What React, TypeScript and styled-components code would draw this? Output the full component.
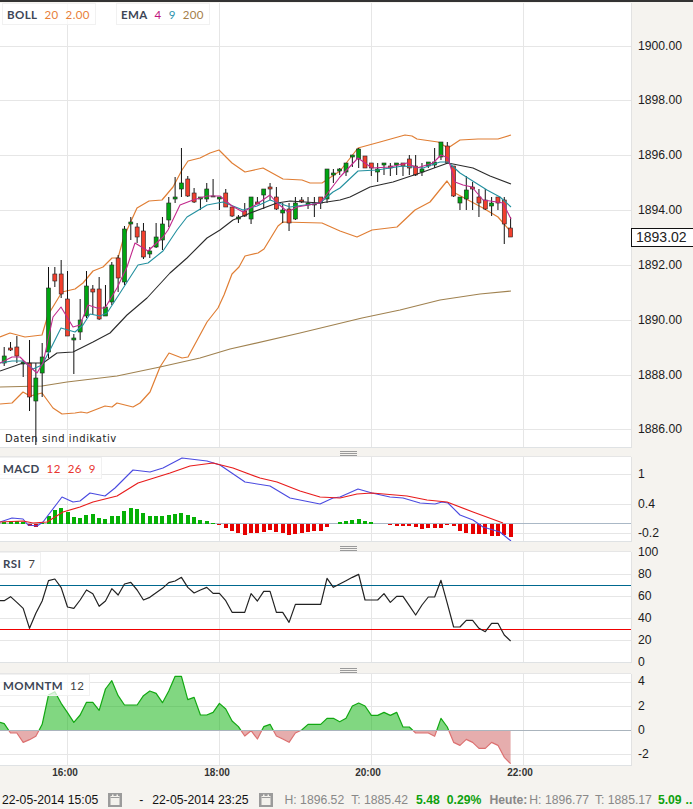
import { createGlobalStyle } from "styled-components";
import styled from "styled-components";

// x of bar i in page pixels; the 2h gridlines fall every 24 bars
const barX = (i: number) => 4.2 + i * 6.33;
const GRID_X = [67.5, 219.5, 371.5, 523.5];
const PLOT_W = 631;

type Pt = [number, number];
const toPoints = (pts: Pt[]) => pts.map(([x, y]) => `${x},${y}`).join(" ");

// [high, bodyTop, bodyBottom, low, up] in pixels of the price pane
type Candle = [number, number, number, number, 0 | 1];
const CANDLES: Candle[] = [
  [347, 356, 363, 366, 1], [342, 348, 350, 351, 0], [336, 347, 356, 363, 0], [360, 362, 364, 377, 1],
  [340, 363, 397, 411, 0], [363, 378, 401, 445, 1], [343, 357, 373, 397, 1], [267, 288, 352, 358, 1],
  [267, 274, 281, 287, 0], [260, 274, 294, 298, 0], [271, 299, 336, 336, 0], [334, 338, 340, 374, 1],
  [299, 320, 332, 340, 1], [271, 286, 316, 318, 1], [285, 289, 292, 315, 0], [277, 289, 319, 320, 0],
  [285, 307, 316, 316, 1], [262, 265, 302, 305, 1], [255, 258, 278, 292, 0], [226, 229, 282, 285, 1],
  [217, 222, 224, 240, 1], [223, 227, 237, 243, 0], [223, 231, 257, 259, 0], [247, 251, 254, 258, 1],
  [223, 237, 247, 248, 1], [217, 224, 240, 250, 1], [197, 203, 220, 227, 1], [177, 197, 199, 203, 1],
  [148, 183, 189, 197, 1], [176, 179, 196, 197, 0], [188, 193, 202, 203, 0], [197, 197, 199, 210, 1],
  [183, 189, 199, 202, 1], [179, 196, 197, 197, 1], [197, 197, 199, 210, 1], [189, 193, 207, 207, 0],
  [207, 207, 216, 217, 0], [215, 217, 219, 223, 1], [203, 211, 216, 217, 0], [197, 197, 219, 224, 1],
  [197, 202, 204, 204, 0], [189, 189, 195, 209, 1], [183, 187, 189, 200, 0], [187, 197, 209, 210, 0],
  [203, 210, 213, 223, 1], [203, 209, 223, 231, 0], [197, 203, 219, 220, 1], [197, 200, 202, 203, 0],
  [197, 203, 205, 209, 1], [197, 204, 205, 217, 1], [197, 197, 203, 209, 0], [169, 169, 199, 203, 1],
  [169, 173, 175, 183, 1], [168, 169, 171, 175, 1], [163, 163, 172, 176, 1], [155, 155, 157, 167, 1],
  [148, 149, 159, 168, 1], [156, 156, 168, 168, 0], [163, 163, 168, 176, 0], [163, 169, 172, 182, 1],
  [163, 163, 165, 175, 1], [163, 166, 168, 176, 0], [163, 163, 165, 175, 1], [163, 163, 166, 176, 0],
  [155, 159, 168, 175, 0], [155, 166, 175, 176, 0], [163, 169, 172, 176, 1], [162, 162, 166, 168, 1],
  [148, 162, 165, 168, 1], [142, 142, 157, 160, 1], [142, 146, 163, 163, 0], [166, 166, 196, 197, 0],
  [197, 197, 203, 210, 1], [176, 190, 199, 210, 1], [182, 187, 189, 210, 0], [189, 197, 203, 217, 0],
  [189, 200, 209, 210, 0], [197, 203, 206, 216, 1], [197, 197, 203, 210, 0], [197, 200, 224, 244, 0],
  [217, 228, 237, 237, 0],
];

const BOLL_UPPER: Pt[] = [
  [0, 337], [10, 333], [25, 337], [42, 335], [48, 315], [62, 292], [75, 289], [83, 283], [93, 271], [103, 267],
  [112, 258], [118, 258], [123, 240], [127, 230], [137, 208], [149, 201], [162, 200], [173, 187], [182, 170],
  [188, 161], [200, 158], [210, 153], [219, 150], [232, 163], [245, 172], [263, 168], [283, 179], [302, 180],
  [310, 183], [322, 183], [340, 171], [358, 148], [380, 142], [405, 135], [412, 136], [417, 139], [438, 142],
  [448, 148], [460, 140], [478, 139], [498, 139], [511, 135],
];
const BOLL_LOWER: Pt[] = [
  [0, 404], [12, 403], [23, 392], [30, 396], [42, 393], [53, 408], [62, 414], [75, 413], [81, 412], [87, 413],
  [105, 406], [112, 407], [117, 403], [133, 407], [140, 403], [150, 392], [160, 367], [169, 353], [182, 358],
  [188, 357], [207, 322], [218, 308], [224, 295], [232, 274], [239, 267], [245, 256], [258, 253], [264, 249],
  [278, 226], [283, 222], [322, 223], [340, 231], [357, 237], [372, 230], [397, 227], [415, 210], [430, 202],
  [447, 181], [455, 193], [483, 208], [498, 217], [511, 232],
];
const EMA_200: Pt[] = [
  [0, 387], [42, 386], [67, 382], [117, 376], [160, 367], [200, 358], [230, 349], [300, 333], [362, 318],
  [400, 310], [440, 300], [480, 294], [511, 291],
];
const EMA_LONG: Pt[] = [
  [0, 371], [23, 363], [43, 363], [57, 353], [73, 352], [93, 342], [110, 333], [127, 315], [147, 298], [170, 273],
  [187, 258], [207, 238], [220, 230], [233, 220], [253, 212], [277, 203], [290, 201], [320, 203], [340, 200],
  [350, 197], [370, 187], [393, 182], [423, 172], [448, 163], [473, 168], [490, 176], [511, 184],
];
const EMA_MID: Pt[] = [
  [0, 363], [12, 361], [23, 361], [33, 369], [42, 365], [50, 350], [61, 328], [75, 332], [83, 325], [90, 314],
  [100, 316], [107, 313], [120, 293], [138, 265], [148, 263], [163, 251], [177, 230], [187, 217], [207, 205],
  [223, 202], [243, 210], [257, 206], [270, 200], [290, 207], [320, 203], [333, 192], [340, 188], [358, 171],
  [377, 170], [403, 166], [423, 168], [440, 162], [448, 162], [460, 173], [487, 190], [500, 197], [511, 207],
];
const EMA_FAST: Pt[] = [
  [0, 363], [12, 357], [20, 357], [30, 367], [37, 373], [43, 363], [53, 317], [61, 307], [73, 327], [80, 325],
  [88, 305], [97, 308], [105, 308], [117, 288], [127, 267], [135, 243], [148, 251], [163, 237], [168, 230],
  [180, 205], [193, 200], [207, 196], [220, 196], [232, 206], [243, 212], [257, 204], [270, 195], [277, 203],
  [288, 212], [297, 207], [320, 203], [340, 177], [358, 158], [372, 168], [390, 167], [407, 163], [417, 168],
  [433, 163], [441, 155], [448, 158], [455, 182], [463, 185], [472, 187], [483, 200], [497, 202], [503, 203],
  [511, 219],
];

const MACD_LINE: Pt[] = [
  [0, 522], [12, 518], [23, 519], [28, 525], [37, 526], [43, 522], [62, 497], [73, 502], [80, 501], [90, 493],
  [105, 496], [115, 488], [133, 470], [150, 472], [163, 468], [182, 458], [207, 461], [220, 465], [245, 482],
  [270, 486], [290, 498], [320, 504], [333, 498], [340, 497], [358, 489], [372, 493], [390, 497], [403, 498],
  [420, 503], [435, 504], [442, 502], [448, 503], [460, 515], [473, 520], [483, 527], [500, 532], [511, 541],
];
const MACD_SIGNAL: Pt[] = [
  [0, 522], [23, 521], [33, 523], [47, 522], [63, 512], [80, 507], [93, 502], [117, 496], [138, 483], [170, 473],
  [190, 466], [213, 463], [233, 468], [260, 478], [277, 482], [300, 491], [320, 497], [340, 498], [357, 494],
  [372, 493], [407, 496], [427, 500], [447, 502], [473, 512], [503, 523],
];
// histogram tops, one per bar, px above (+) or below (-) the zero line
const MACD_HIST = [
  2, 3, 3, 2, -2, -3, 1, 8, 14, 16, 12, 7, 6, 9, 10, 6, 5, 8, 8, 13, 16, 15, 11, 8, 8, 8, 9, 10, 11, 9, 7, 4, 3, 1,
  -1, -4, -7, -9, -11, -9, -9, -8, -6, -8, -9, -11, -10, -9, -8, -7, -7, -3, 0, 2, 3, 4, 5, 3, 2, 0, 0, -1, -2, -2,
  -2, -3, -5, -4, -4, -4, -1, -2, -7, -9, -10, -10, -10, -12, -12, -11, -13,
];

// one value per bar, read off at 3x
const RSI = [
  167, 155, 172, 190, 250, 205, 168, 107, 102, 128, 186, 190, 165, 135, 146, 184, 168, 131, 150, 117, 112, 135, 165,
  157, 143, 130, 113, 108, 97, 127, 144, 135, 127, 145, 145, 167, 202, 202, 202, 146, 168, 139, 139, 202, 202, 232,
  178, 178, 178, 178, 178, 100, 127, 117, 107, 97, 88, 165, 165, 165, 146, 172, 154, 154, 182, 210, 180, 156, 156,
  106, 175, 246, 246, 226, 226, 250, 260, 235, 235, 270, 288,
];
const MOMENTUM = [
  176, 204, 204, 232, 224, 214, 178, 90, 80, 115, 143, 172, 150, 112, 112, 136, 72, 47, 92, 120, 120, 120, 92, 78, 85,
  113, 78, 34, 34, 104, 97, 150, 150, 142, 115, 132, 168, 185, 213, 197, 222, 185, 178, 213, 222, 232, 204, 195, 178,
  178, 178, 160, 160, 170, 160, 123, 114, 123, 151, 151, 142, 151, 142, 186, 186, 204, 204, 204, 214, 160, 186, 232,
  241, 223, 232, 250, 250, 232, 241, 277, 296,
];

const GlobalStyle = createGlobalStyle`
  html, body {
    margin: 0;
    background: #f5f3ef;
    overflow: hidden;
  }
`;

const Root = styled.div`
  position: relative;
  width: 693px;
  height: 809px;
  overflow: hidden;
  background: #f5f3ef;
  font-family: "Liberation Sans", Arial, sans-serif;
`;

const TopLine = styled.div`
  height: 2px;
  background: #333;
  margin-bottom: 1px;
`;

const PaneRow = styled.div<{ $h: number }>`
  display: flex;
  height: ${(p) => p.$h}px;
`;

const Plot = styled.div`
  position: relative;
  width: ${PLOT_W + 1}px;
  background: #fff;
  border-right: 1px solid #e2e2e2;
  border-bottom: 1px solid #dfe2e4;
  box-sizing: border-box;
`;

const PlotSvg = styled.svg`
  display: block;
`;

const AxisSvg = styled.svg`
  display: block;
  flex: none;
  overflow: visible;
  font-family: "Liberation Sans", Arial, sans-serif;
  font-size: 12.2px;
  fill: #1c1c1c;
`;

const Splitter = styled.div<{ $h: number }>`
  display: flex;
  justify-content: flex-end;
  align-items: flex-end;
  width: ${PLOT_W}px;
  height: ${(p) => p.$h}px;
  padding-right: 274px;
  box-sizing: border-box;
  border-bottom: 1px solid #e6e6e6;
`;

const Grip = styled.div`
  width: 17px;
  height: 5px;
  border-top: 1px solid #9a9a9a;
  border-bottom: 1px solid #9a9a9a;
  box-sizing: border-box;
  background: linear-gradient(#9a9a9a, #9a9a9a) center / 100% 1px no-repeat;
`;

const LegendRow = styled.div<{ $left: number }>`
  position: absolute;
  left: ${(p) => p.$left}px;
  top: 0;
  display: flex;
  gap: 20px;
`;

const Legend = styled.div`
  display: flex;
  gap: 7px;
  height: 22px;
  align-items: center;
  padding: 0 5px 0 4px;
  background: rgba(255, 255, 255, 0.75);
  border: 1px solid #f1f1f1;
  box-sizing: border-box;
  font-family: Lato, sans-serif;
  font-size: 11.5px;
  letter-spacing: 0.4px;
  white-space: nowrap;
`;

const LegendName = styled.span`
  font-weight: 700;
  color: #3d4656;
`;

const LegendValue = styled.span<{ $color: string }>`
  color: ${(p) => p.$color};
`;

const Notice = styled.div`
  position: absolute;
  left: 5px;
  bottom: 3px;
  font-family: "DejaVu Sans", sans-serif;
  font-size: 10px;
  letter-spacing: 0.6px;
  color: #222;
`;

const PriceTag = styled.div`
  position: absolute;
  left: 631px;
  top: 228px;
  width: 62px;
  height: 19px;
  line-height: 17px;
  padding-left: 4px;
  box-sizing: border-box;
  background: #fff;
  border: 1px solid #111;
  border-right: 0;
  font-size: 14px;
  color: #222;
`;

const TimeAxis = styled.svg`
  display: block;
  font-family: "Liberation Sans", Arial, sans-serif;
  font-size: 10px;
  font-weight: 700;
  fill: #333;
  text-anchor: middle;
`;

const StatusBar = styled.div`
  display: flex;
  align-items: center;
  height: 19px;
  padding-left: 2px;
  white-space: nowrap;
  font-size: 12.2px;
  color: #111;
`;

const Stat = styled.span<{ $gap?: number }>`
  flex: none;
  margin-left: ${(p) => p.$gap ?? 0}px;
  color: #888;
`;

const DateText = styled.span<{ $gap?: number }>`
  flex: none;
  margin-left: ${(p) => p.$gap ?? 0}px;
`;

const Gain = styled.span<{ $gap: number }>`
  flex: none;
  margin-left: ${(p) => p.$gap}px;
  font-weight: 700;
  color: #0ea10e;
`;

const StatLabel = styled.span<{ $gap: number }>`
  flex: none;
  margin-left: ${(p) => p.$gap}px;
  font-weight: 700;
  color: #888;
`;

const CalendarButton = styled.svg<{ $gap: number }>`
  flex: none;
  display: block;
  margin-left: ${(p) => p.$gap}px;
`;

function Grid({ h, rows }: { h: number; rows: number[] }) {
  return (
    <g stroke="#e6e6e6" strokeWidth="1" shapeRendering="crispEdges">
      {rows.map((y) => (
        <line key={y} x1="0" x2={PLOT_W} y1={y} y2={y} />
      ))}
      {GRID_X.map((x) => (
        <line key={x} x1={x} x2={x} y1="0" y2={h} />
      ))}
    </g>
  );
}

function Axis({ h, ticks }: { h: number; ticks: [number, string][] }) {
  return (
    <AxisSvg width="61" height={h}>
      {ticks.map(([y, label]) => (
        <text key={label} x="6" y={y + 3.5}>
          {label}
        </text>
      ))}
    </AxisSvg>
  );
}

function Trend({ pts, color, w = 1.1 }: { pts: Pt[]; color: string; w?: number }) {
  return <polyline points={toPoints(pts)} fill="none" stroke={color} strokeWidth={w} strokeLinejoin="round" />;
}

function PricePane() {
  // pane starts at page y=3
  const shift = (pts: Pt[]) => pts.map(([x, y]) => [x, y - 3] as Pt);
  const rows = [46, 100, 155, 210, 265, 320, 375, 429].map((y) => y - 3);
  return (
    <PaneRow $h={445}>
      <Plot>
        <PlotSvg width={PLOT_W} height="444">
          <Grid h={444} rows={rows} />
          <Trend pts={shift(BOLL_UPPER)} color="#e07e34" w={1.2} />
          <Trend pts={shift(BOLL_LOWER)} color="#e07e34" w={1.2} />
          <Trend pts={shift(EMA_200)} color="#a08250" w={1.2} />
          {CANDLES.map(([hi, top, bot, lo, up], i) => {
            const x = barX(i);
            return (
              <g key={i}>
                <line x1={x} x2={x} y1={hi - 3} y2={lo - 3} stroke="#111" strokeWidth="1" />
                <rect
                  x={x - 2}
                  y={top - 3}
                  width="4"
                  height={bot - top}
                  fill={up ? "#00a512" : "#f2402e"}
                  stroke="#222"
                  strokeWidth="0.6"
                />
              </g>
            );
          })}
          <Trend pts={shift(EMA_LONG)} color="#2b2b2b" />
          <Trend pts={shift(EMA_MID)} color="#23909f" />
          <Trend pts={shift(EMA_FAST)} color="#c2288c" />
        </PlotSvg>
        <LegendRow $left={2}>
          <Legend>
            <LegendName>BOLL</LegendName>
            <LegendValue $color="#e8803a">20</LegendValue>
            <LegendValue $color="#e8803a">2.00</LegendValue>
          </Legend>
          <Legend>
            <LegendName>EMA</LegendName>
            <LegendValue $color="#c0147e">4</LegendValue>
            <LegendValue $color="#2d93ad">9</LegendValue>
            <LegendValue $color="#a5804a">200</LegendValue>
          </Legend>
        </LegendRow>
        <Notice>Daten sind indikativ</Notice>
      </Plot>
      <Axis
        h={445}
        ticks={[
          [46, "1900.00"],
          [100, "1898.00"],
          [155, "1896.00"],
          [210, "1894.00"],
          [265, "1892.00"],
          [320, "1890.00"],
          [375, "1888.00"],
          [429, "1886.00"],
        ].map(([y, l]) => [(y as number) - 3, l as string])}
      />
    </PaneRow>
  );
}

function MacdPane() {
  const top = 457;
  const zero = 523.5 - top;
  const shift = (pts: Pt[]) => pts.map(([x, y]) => [x, y - top] as Pt);
  return (
    <PaneRow $h={85}>
      <Plot>
        <PlotSvg width={PLOT_W} height="84">
          <Grid h={84} rows={[17, 47, 76]} />
          <line x1="0" x2={PLOT_W} y1={zero} y2={zero} stroke="#aab8c6" shapeRendering="crispEdges" />
          {MACD_HIST.map((v, i) =>
            v === 0 ? null : (
              <rect
                key={i}
                x={barX(i) - 2}
                y={v > 0 ? zero - v : zero}
                width="4"
                height={Math.abs(v)}
                fill={v > 0 ? "#05b005" : "#e60000"}
                shapeRendering="crispEdges"
              />
            ),
          )}
          <Trend pts={shift(MACD_LINE)} color="#4a4ae0" />
          <Trend pts={shift(MACD_SIGNAL)} color="#e81c1c" w={1.2} />
        </PlotSvg>
        <LegendRow $left={-2}>
          <Legend>
            <LegendName>MACD</LegendName>
            <LegendValue $color="#e8352e">12</LegendValue>
            <LegendValue $color="#e8352e">26</LegendValue>
            <LegendValue $color="#e8352e">9</LegendValue>
          </Legend>
        </LegendRow>
      </Plot>
      <Axis
        h={85}
        ticks={[
          [17, "1"],
          [47, "0.4"],
          [76, "-0.2"],
        ]}
      />
    </PaneRow>
  );
}

function RsiPane() {
  const toY = (v: number) => v / 3 - 7;
  const line: Pt[] = [[0, toY(167)], ...RSI.map((v, i) => [barX(i), toY(v)] as Pt)];
  return (
    <PaneRow $h={111}>
      <Plot>
        <PlotSvg width={PLOT_W} height="110">
          <Grid h={110} rows={[22, 44, 66, 88]} />
          <line x1="0" x2={PLOT_W} y1="33" y2="33" stroke="#00688f" shapeRendering="crispEdges" />
          <line x1="0" x2={PLOT_W} y1="77" y2="77" stroke="#f00000" shapeRendering="crispEdges" />
          <Trend pts={line} color="#222" w={1.2} />
        </PlotSvg>
        <LegendRow $left={-2}>
          <Legend>
            <LegendName>RSI</LegendName>
            <LegendValue $color="#444">7</LegendValue>
          </Legend>
        </LegendRow>
      </Plot>
      <Axis
        h={111}
        ticks={[
          [0, "100"],
          [22, "80"],
          [44, "60"],
          [66, "40"],
          [88, "20"],
          [110, "0"],
        ]}
      />
    </PaneRow>
  );
}

function MomentumPane() {
  // the readings are taken at 3x from y=665, the pane starts at y=674
  const line: Pt[] = [[0, 172 / 3 + 665 - 674], ...MOMENTUM.map((v, i) => [barX(i), v / 3 + 665 - 674] as Pt)];
  const zero = 56;
  const area = [[0, zero] as Pt, ...line, [barX(80), zero] as Pt];
  return (
    <PaneRow $h={92}>
      <Plot>
        <PlotSvg width={PLOT_W} height="91">
          <defs>
            <clipPath id="mom-up">
              <rect x="0" y="0" width={PLOT_W} height={zero} />
            </clipPath>
            <clipPath id="mom-down">
              <rect x="0" y={zero} width={PLOT_W} height={91 - zero} />
            </clipPath>
          </defs>
          <Grid h={91} rows={[8, 32, 80]} />
          <g clipPath="url(#mom-up)">
            <polygon points={toPoints(area)} fill="#04b004" fillOpacity="0.5" />
            <Trend pts={line} color="#12a812" w={1.2} />
          </g>
          <g clipPath="url(#mom-down)">
            <polygon points={toPoints(area)} fill="#cd5c5c" fillOpacity="0.5" />
            <Trend pts={line} color="#dc7070" w={1.2} />
          </g>
          <line x1="0" x2={PLOT_W} y1={zero} y2={zero} stroke="#aab4bd" shapeRendering="crispEdges" />
        </PlotSvg>
        <LegendRow $left={-2}>
          <Legend>
            <LegendName>MOMNTM</LegendName>
            <LegendValue $color="#444">12</LegendValue>
          </Legend>
        </LegendRow>
      </Plot>
      <Axis
        h={92}
        ticks={[
          [7, "4"],
          [32, "2"],
          [56, "0"],
          [80, "-2"],
        ]}
      />
    </PaneRow>
  );
}

function CalendarIcon({ gap }: { gap: number }) {
  return (
    <CalendarButton $gap={gap} width="14" height="14" viewBox="0 0 14 14">
      <rect width="14" height="14" fill="#9b9b9b" />
      <rect x="2.5" y="3" width="9" height="9" fill="#f3f1ec" />
      <rect x="4" y="1.5" width="1.5" height="2.5" fill="#f3f1ec" />
      <rect x="8.5" y="1.5" width="1.5" height="2.5" fill="#f3f1ec" />
      <rect x="2.5" y="4" width="9" height="1" fill="#9b9b9b" />
    </CalendarButton>
  );
}

export default function App() {
  return (
    <Root>
      <GlobalStyle />
      <TopLine />
      <PricePane />
      <PriceTag>1893.02</PriceTag>
      <Splitter $h={9}>
        <Grip />
      </Splitter>
      <MacdPane />
      <Splitter $h={10}>
        <Grip />
      </Splitter>
      <RsiPane />
      <Splitter $h={11}>
        <Grip />
      </Splitter>
      <MomentumPane />
      <TimeAxis width="693" height="24">
        <text x="65" y="10">16:00</text>
        <text x="217" y="10">18:00</text>
        <text x="368" y="10">20:00</text>
        <text x="520" y="10">22:00</text>
      </TimeAxis>
      <StatusBar>
        <DateText>22-05-2014 15:05</DateText>
        <CalendarIcon gap={10} />
        <DateText $gap={17}>-</DateText>
        <DateText $gap={9}>22-05-2014 23:25</DateText>
        <CalendarIcon gap={10} />
        <Stat $gap={12}>H: 1896.52</Stat>
        <Stat $gap={7}>T: 1885.42</Stat>
        <Gain $gap={8}>5.48</Gain>
        <Gain $gap={7}>0.29%</Gain>
        <StatLabel $gap={8}>Heute:</StatLabel>
        <Stat $gap={2}>H: 1896.77</Stat>
        <Stat $gap={6}>T: 1885.17</Stat>
        <Gain $gap={6}>5.09</Gain>
        <Gain $gap={4}>..</Gain>
      </StatusBar>
    </Root>
  );
}
